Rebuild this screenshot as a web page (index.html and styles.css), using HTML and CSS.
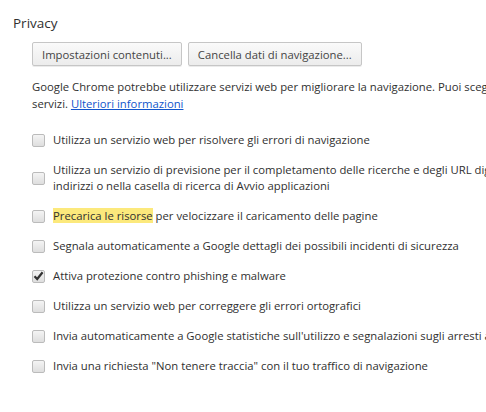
FILE: index.html
```html
<!DOCTYPE html>
<html lang="it">
  <head>
    <meta charset="UTF-8" />
    <title>Privacy</title>
    <link rel="stylesheet" href="styles.css">
  </head>
  <body>
    <section class="section">
      <h3>Privacy</h3>
      <div class="section-body">
        <!-- Buttons -->
        <div class="button-row">
          <button>Impostazioni contenuti...</button>
          <button>Cancella dati di navigazione...</button>
        </div>

        <p class="intro">
          Google Chrome potrebbe utilizzare servizi web per migliorare la navigazione. Puoi scegliere di disattivare questi<br>
          servizi. <a href="#">Ulteriori informazioni</a>
        </p>

        <!-- Options -->
        <div class="options">
          <div class="option">
            <span class="box"></span>
            <span class="label">Utilizza un servizio web per risolvere gli errori di navigazione</span>
          </div>
          <div class="option two-lines">
            <span class="box"></span>
            <span class="label">Utilizza un servizio di previsione per il completamento delle ricerche e degli URL digitati nella barra degli<br>indirizzi o nella casella di ricerca di Avvio applicazioni</span>
          </div>
          <div class="option">
            <span class="box"></span>
            <span class="label"><mark>Precarica le risorse</mark> per velocizzare il caricamento delle pagine</span>
          </div>
          <div class="option">
            <span class="box"></span>
            <span class="label">Segnala automaticamente a Google dettagli dei possibili incidenti di sicurezza</span>
          </div>
          <div class="option">
            <span class="box">
              <svg width="11" height="10" viewBox="0 0 11 10"><path d="M1.5 5.2 L4.2 8 L9.6 1.2" fill="none" stroke="#333" stroke-width="2.2"/></svg>
            </span>
            <span class="label">Attiva protezione contro phishing e malware</span>
          </div>
          <div class="option">
            <span class="box"></span>
            <span class="label">Utilizza un servizio web per correggere gli errori ortografici</span>
          </div>
          <div class="option">
            <span class="box"></span>
            <span class="label">Invia automaticamente a Google statistiche sull'utilizzo e segnalazioni sugli arresti anomali</span>
          </div>
          <div class="option">
            <span class="box"></span>
            <span class="label">Invia una richiesta "Non tenere traccia" con il tuo traffico di navigazione</span>
          </div>
        </div>
      </div>
    </section>
  </body>
</html>
```

FILE: styles.css
```css
body {
  margin: 0;
  font-family: "Open Sans", sans-serif;
  font-size: 11.3px;
  color: #303030;
  background: #fff;
  overflow: hidden;
  width: 486px;
  height: 412px;
}

.section {
  padding: 14px 0 0 13px;
}

h3 {
  margin: 0;
  font-size: 13.5px;
  font-weight: normal;
  color: #303030;
  line-height: 18px;
}

.section-body {
  padding-left: 19px;
}

.button-row {
  display: flex;
  gap: 6px;
  margin-top: 10px;
}

.button-row button {
  height: 24px;
  padding: 0 9px;
  font-family: "Open Sans", sans-serif;
  font-size: 11.3px;
  color: #444;
  background: linear-gradient(#fafafa, #ececec);
  border: 1px solid #c6c6c6;
  border-radius: 2px;
  box-shadow: 0 1px 0 rgba(0, 0, 0, 0.08);
}

.intro {
  margin: 12px 0 0;
  line-height: 17px;
  white-space: nowrap;
}

.intro a {
  color: #15c;
}

.options {
  margin-top: 13px;
}

.option {
  display: flex;
  align-items: center;
  gap: 8px;
  height: 30px;
  white-space: nowrap;
}

.option.two-lines {
  height: 46px;
}

.option .label {
  line-height: 16px;
}

.box {
  width: 13px;
  height: 13px;
  flex: none;
  box-sizing: border-box;
  border: 1px solid #bbb;
  border-radius: 2px;
  background: linear-gradient(#f4f4f4, #dedede);
  display: flex;
  align-items: center;
  justify-content: center;
}

mark {
  background: #fce97c;
  color: inherit;
}
```
